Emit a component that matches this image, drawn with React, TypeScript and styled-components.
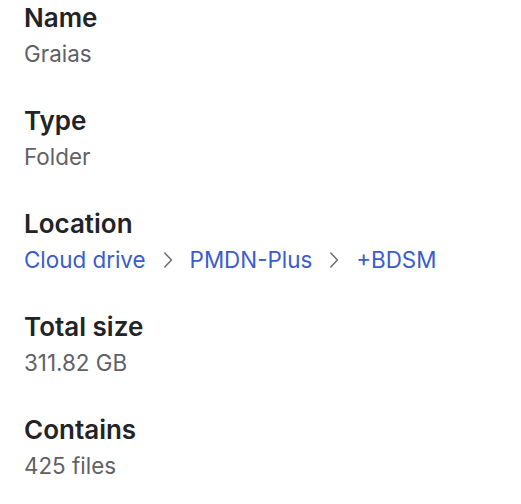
import React from "react";
import styled, { createGlobalStyle } from "styled-components";

const Global = createGlobalStyle`
  html, body { margin: 0; padding: 0; background: #ffffff; }
  body { font-family: Inter, "Noto Sans", sans-serif; }
`;

const Panel = styled.div`
  display: flex;
  flex-direction: column;
  gap: 37px;
  padding: 3px 24px 0 24px;
`;

const Field = styled.section`
  display: flex;
  flex-direction: column;
  gap: 6px;
`;

const Label = styled.div`
  font-size: 26px;
  line-height: 30px;
  font-weight: 600;
  color: #222326;
`;

const Value = styled.div`
  font-size: 22.4px;
  line-height: 30px;
  font-weight: 400;
  color: #5f6166;
`;

const Crumbs = styled.div`
  display: flex;
  align-items: center;
  gap: 17px;
  font-size: 22.4px;
  line-height: 30px;
`;

const Crumb = styled.a`
  color: #3a5ccc;
  text-decoration: none;
`;

const Sep = styled.svg`
  width: 10px;
  height: 16px;
  color: #6c6e72;
  flex: none;
`;

const Chevron = () => (
  <Sep viewBox="0 0 10 16" fill="none">
    <path d="M1.8 1 L8.4 8 L1.8 15" stroke="currentColor" strokeWidth="1.5" strokeLinecap="round" strokeLinejoin="round" />
  </Sep>
);

export default function App() {
  const path = ["Cloud drive", "PMDN-Plus", "+BDSM"];
  return (
    <>
      <Global />
      <Panel>
        <Field>
          <Label>Name</Label>
          <Value>Graias</Value>
        </Field>
        <Field>
          <Label>Type</Label>
          <Value>Folder</Value>
        </Field>
        <Field>
          <Label>Location</Label>
          <Crumbs>
            {path.map((p, i) => (
              <React.Fragment key={p}>
                {i > 0 && <Chevron />}
                <Crumb href="#">{p}</Crumb>
              </React.Fragment>
            ))}
          </Crumbs>
        </Field>
        <Field>
          <Label>Total size</Label>
          <Value>311.82 GB</Value>
        </Field>
        <Field>
          <Label>Contains</Label>
          <Value>425 files</Value>
        </Field>
      </Panel>
    </>
  );
}
